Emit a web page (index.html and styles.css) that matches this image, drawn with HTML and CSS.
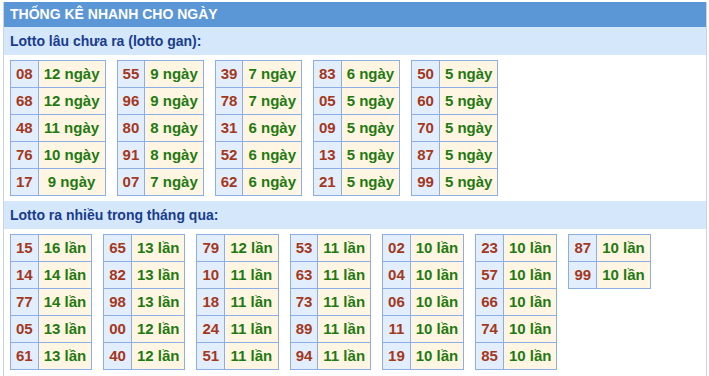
FILE: index.html
```html
<!DOCTYPE html>
<html lang="vi">
<head>
<meta charset="utf-8">
<title>Thống kê nhanh</title>
<link rel="stylesheet" href="styles.css">
</head>
<body>
<div class="box">
  <div class="title">THỐNG KÊ NHANH CHO NGÀY</div>
  <div class="sub">Lotto lâu chưa ra (lotto gan):</div>
  <div class="grid">
    <table class="t"><tr><td class="n">08</td><td class="v">12 ngày</td></tr><tr><td class="n">68</td><td class="v">12 ngày</td></tr><tr><td class="n">48</td><td class="v">11 ngày</td></tr><tr><td class="n">76</td><td class="v">10 ngày</td></tr><tr><td class="n">17</td><td class="v">9 ngày</td></tr></table>
    <table class="t"><tr><td class="n">55</td><td class="v">9 ngày</td></tr><tr><td class="n">96</td><td class="v">9 ngày</td></tr><tr><td class="n">80</td><td class="v">8 ngày</td></tr><tr><td class="n">91</td><td class="v">8 ngày</td></tr><tr><td class="n">07</td><td class="v">7 ngày</td></tr></table>
    <table class="t"><tr><td class="n">39</td><td class="v">7 ngày</td></tr><tr><td class="n">78</td><td class="v">7 ngày</td></tr><tr><td class="n">31</td><td class="v">6 ngày</td></tr><tr><td class="n">52</td><td class="v">6 ngày</td></tr><tr><td class="n">62</td><td class="v">6 ngày</td></tr></table>
    <table class="t"><tr><td class="n">83</td><td class="v">6 ngày</td></tr><tr><td class="n">05</td><td class="v">5 ngày</td></tr><tr><td class="n">09</td><td class="v">5 ngày</td></tr><tr><td class="n">13</td><td class="v">5 ngày</td></tr><tr><td class="n">21</td><td class="v">5 ngày</td></tr></table>
    <table class="t"><tr><td class="n">50</td><td class="v">5 ngày</td></tr><tr><td class="n">60</td><td class="v">5 ngày</td></tr><tr><td class="n">70</td><td class="v">5 ngày</td></tr><tr><td class="n">87</td><td class="v">5 ngày</td></tr><tr><td class="n">99</td><td class="v">5 ngày</td></tr></table>
  </div>
  <div class="sub">Lotto ra nhiều trong tháng qua:</div>
  <div class="grid">
    <table class="t"><tr><td class="n">15</td><td class="v">16 lần</td></tr><tr><td class="n">14</td><td class="v">14 lần</td></tr><tr><td class="n">77</td><td class="v">14 lần</td></tr><tr><td class="n">05</td><td class="v">13 lần</td></tr><tr><td class="n">61</td><td class="v">13 lần</td></tr></table>
    <table class="t"><tr><td class="n">65</td><td class="v">13 lần</td></tr><tr><td class="n">82</td><td class="v">13 lần</td></tr><tr><td class="n">98</td><td class="v">13 lần</td></tr><tr><td class="n">00</td><td class="v">12 lần</td></tr><tr><td class="n">40</td><td class="v">12 lần</td></tr></table>
    <table class="t"><tr><td class="n">79</td><td class="v">12 lần</td></tr><tr><td class="n">10</td><td class="v">11 lần</td></tr><tr><td class="n">18</td><td class="v">11 lần</td></tr><tr><td class="n">24</td><td class="v">11 lần</td></tr><tr><td class="n">51</td><td class="v">11 lần</td></tr></table>
    <table class="t"><tr><td class="n">53</td><td class="v">11 lần</td></tr><tr><td class="n">63</td><td class="v">11 lần</td></tr><tr><td class="n">73</td><td class="v">11 lần</td></tr><tr><td class="n">89</td><td class="v">11 lần</td></tr><tr><td class="n">94</td><td class="v">11 lần</td></tr></table>
    <table class="t"><tr><td class="n">02</td><td class="v">10 lần</td></tr><tr><td class="n">04</td><td class="v">10 lần</td></tr><tr><td class="n">06</td><td class="v">10 lần</td></tr><tr><td class="n">11</td><td class="v">10 lần</td></tr><tr><td class="n">19</td><td class="v">10 lần</td></tr></table>
    <table class="t"><tr><td class="n">23</td><td class="v">10 lần</td></tr><tr><td class="n">57</td><td class="v">10 lần</td></tr><tr><td class="n">66</td><td class="v">10 lần</td></tr><tr><td class="n">74</td><td class="v">10 lần</td></tr><tr><td class="n">85</td><td class="v">10 lần</td></tr></table>
    <table class="t"><tr><td class="n">87</td><td class="v">10 lần</td></tr><tr><td class="n">99</td><td class="v">10 lần</td></tr></table>
  </div>
</div>
</body>
</html>
```
FILE: styles.css
```css
html, body {
  background: #ffffff;
}
body {
  margin: 2px 2px 0 3px;
  font-family: "Liberation Sans", Arial, sans-serif;
}
.box {
  border-left: 1px solid #c9d3e3;
  border-right: 1px solid #c9d3e3;
  min-height: 374px;
}
.title {
  height: 25px;
  line-height: 25px;
  background: #5b96d6;
  color: #ffffff;
  font-weight: bold;
  font-size: 14px;
  padding-left: 6px;
}
.sub {
  height: 28px;
  line-height: 28px;
  background: #d5e7fb;
  color: #183c8e;
  font-weight: bold;
  font-size: 14px;
  padding-left: 6px;
}
.grid {
  display: flex;
  align-items: flex-start;
  gap: 11px;
  padding: 5px 6px 5px 6px;
}
.t {
  border-collapse: collapse;
}
.t td {
  border: 1px solid #8daee4;
  padding: 5px 5px;
  font-weight: bold;
  font-size: 15px;
  line-height: 16px;
  text-align: center;
  white-space: nowrap;
}
.t .n {
  background: #e3eefc;
  color: #a3381c;
}
.t .v {
  background: #fff5e3;
  color: #1f7a12;
}
```
